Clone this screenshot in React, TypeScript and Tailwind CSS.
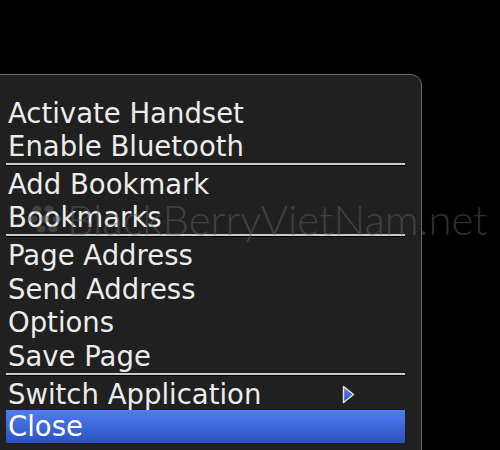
import React from "react";

const FONT = { fontFamily: '"DejaVu Sans", "Liberation Sans", sans-serif' };

type Row = { label: string; h: string; arrow?: boolean; active?: boolean };

const groups: Row[][] = [
  [
    { label: "Activate Handset", h: "h-[33px]" },
    { label: "Enable Bluetooth", h: "h-[33px]" },
  ],
  [
    { label: "Add Bookmark", h: "h-[33px]" },
    { label: "Bookmarks", h: "h-[33px]" },
  ],
  [
    { label: "Page Address", h: "h-[33.5px]" },
    { label: "Send Address", h: "h-[33.5px]" },
    { label: "Options", h: "h-[33.5px]" },
    { label: "Save Page", h: "h-[33.5px]" },
  ],
  [
    { label: "Switch Application", h: "h-[32px]", arrow: true },
    { label: "Close", h: "h-[33px]", active: true },
  ],
];

function SubmenuArrow() {
  return (
    <svg width="13" height="19" viewBox="0 0 13 19">
      <defs>
        <linearGradient id="arr" x1="0" y1="0" x2="0" y2="1">
          <stop offset="0" stopColor="#5a86f5" />
          <stop offset="1" stopColor="#2c4fb8" />
        </linearGradient>
      </defs>
      <polygon points="1.5,1.5 11.5,9.5 1.5,17.5" fill="url(#arr)" stroke="#e4e4ea" strokeWidth="1.4" strokeLinejoin="round" />
    </svg>
  );
}

function Separator() {
  return (
    <div className="h-[5px]">
      <div className="h-[2px] bg-[#c9c9ce] shadow-[0_1px_0_#000]" />
    </div>
  );
}

function BBLogo() {
  const dots = [
    [8, 4], [20, 4],
    [4, 14], [16, 14], [28, 14],
    [12, 24], [24, 24],
  ];
  return (
    <svg width="36" height="32" viewBox="0 0 36 32">
      {dots.map(([x, y], i) => (
        <ellipse key={i} cx={x + 2} cy={y + 2} rx="4.6" ry="3.6" fill="rgba(96,96,96,0.5)" />
      ))}
    </svg>
  );
}

export default function App() {
  return (
    <div className="relative w-[500px] h-[450px] overflow-hidden bg-black pt-[74px]" style={FONT}>
      <div className="ml-[-2px] w-[424px] h-[420px] rounded-tr-[11px] border border-[#676767] bg-[#202020] pt-[22px] pl-[7px]">
        <div className="w-[399px]">
          {groups.map((g, gi) => (
            <div key={gi}>
              {g.map((r) => (
                <div
                  key={r.label}
                  className={`${r.h} flex items-center justify-between pl-[2px] pr-[50px] text-[27.5px] ${
                    r.active
                      ? "bg-gradient-to-b from-[#4e7ef6] to-[#2d51bd] text-white"
                      : "text-[#ececec]"
                  }`}
                  style={{ lineHeight: "33px" }}
                >
                  <span className="whitespace-nowrap">{r.label}</span>
                  {r.arrow && <SubmenuArrow />}
                </div>
              ))}
              {gi < groups.length - 1 && <Separator />}
            </div>
          ))}
        </div>
      </div>

      <div className="pointer-events-none absolute left-[27px] top-[198px] flex items-center gap-[4px]">
        <BBLogo />
        <span
          className="text-[42px] leading-none font-light whitespace-nowrap text-[rgba(96,96,96,0.5)]"
          style={{ fontFamily: 'Lato, "Open Sans", sans-serif' }}
        >
          BlackBerryVietNam.net
        </span>
      </div>
    </div>
  );
}
